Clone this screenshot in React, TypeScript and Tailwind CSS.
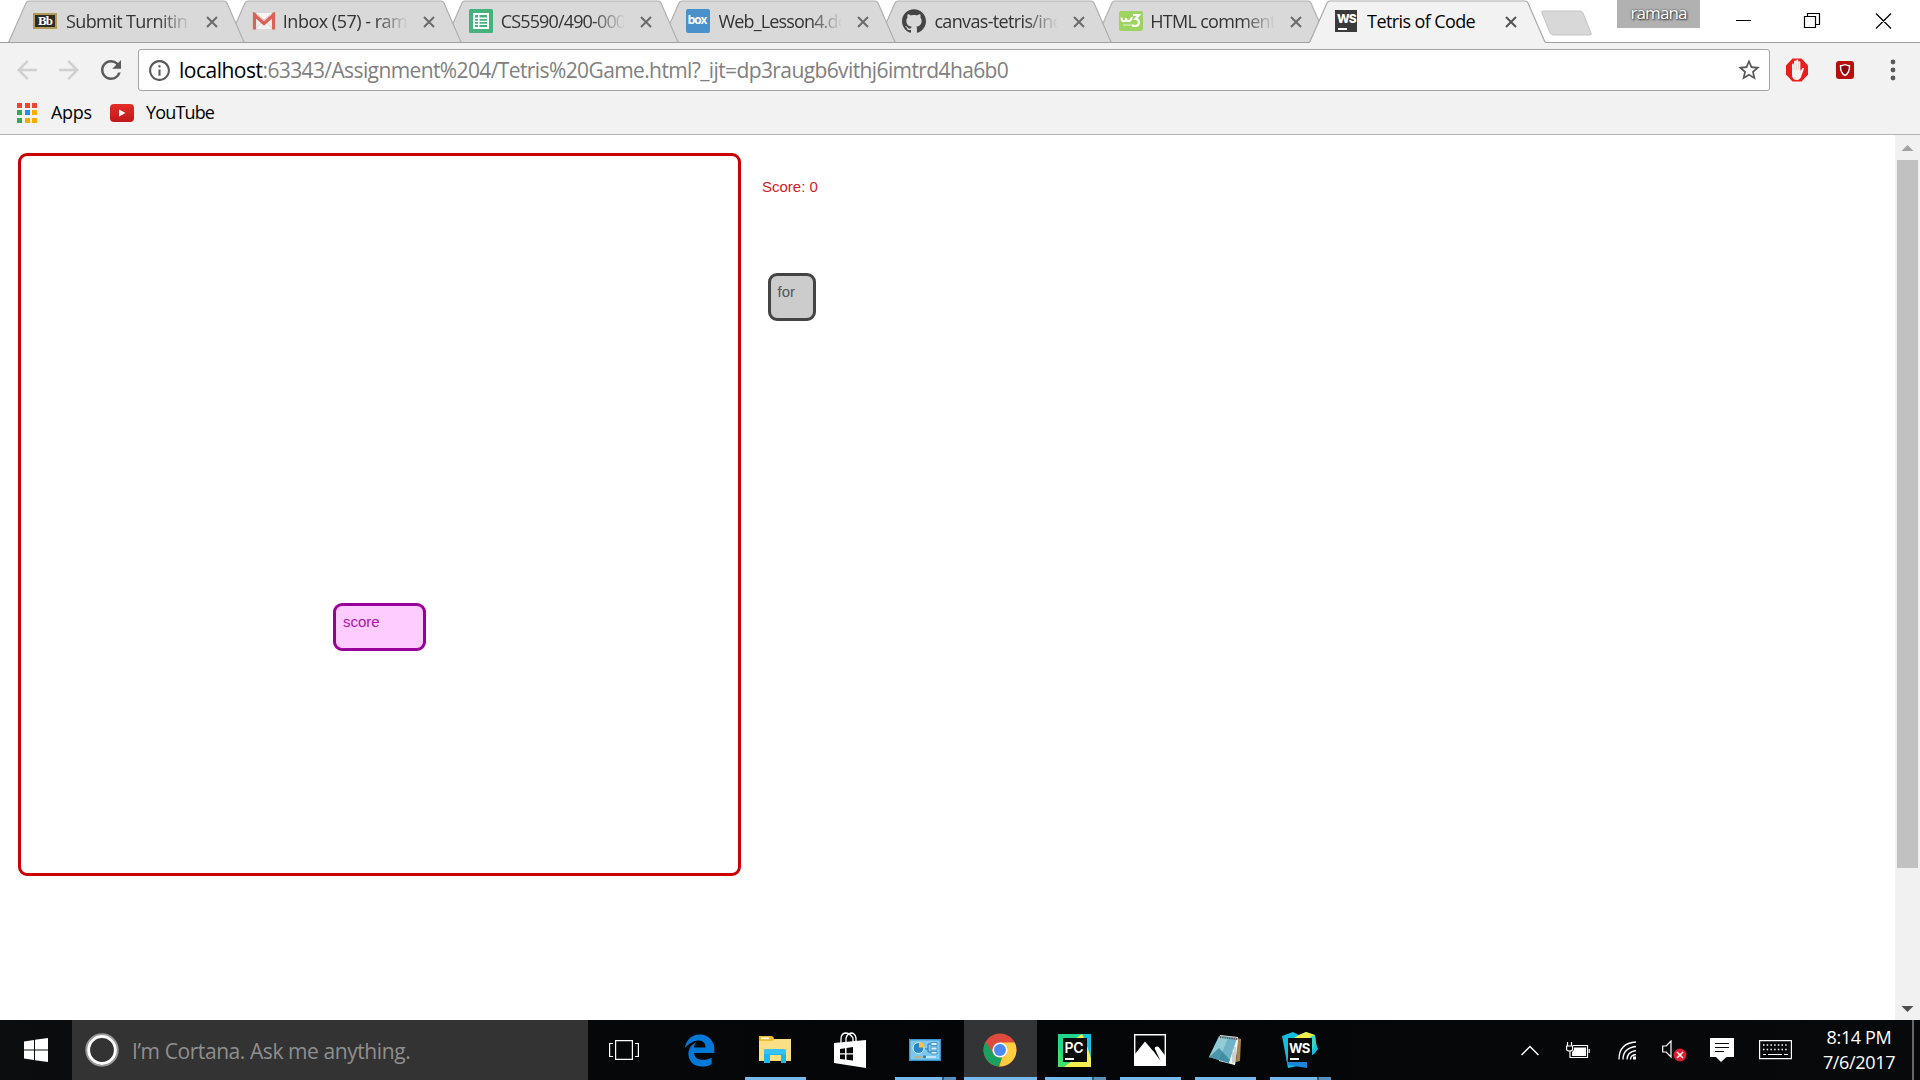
import React from "react";
import { SiGithub } from "react-icons/si";
import { FaEdgeLegacy } from "react-icons/fa6";
import { MdArrowBack, MdArrowForward, MdRefresh, MdInfoOutline, MdStarBorder } from "react-icons/md";

const UI = "font-['Open_Sans','Noto_Sans',sans-serif]";

function Blackboard() {
  return (
    <div className="mr-[2px] flex h-[16px] w-[24px] shrink-0 items-center justify-center border-2 border-[#b59a55] bg-[#2b2b2b] font-['Liberation_Serif',serif] text-[13px] leading-none font-bold tracking-[-1px] text-white">
      Bb
    </div>
  );
}
function Gmail() {
  return (
    <svg width="24" height="18" viewBox="0 0 24 18">
      <rect x="2" y="1" width="20" height="16" fill="#f1f1f1" />
      <path d="M3 17l7-7M21 17l-7-7" stroke="#d6d6d6" />
      <path d="M2.500 17.500V3L12 11.500 21.500 3v14.500" fill="none" stroke="#dc6258" strokeWidth="3.200" />
      <path d="M1 2.500Q1 .5 3 .5L12 8.500 21 .5q2 0 2 2" fill="#dc6258" />
      <path d="M4 1.200L12 8l8-6.800z" fill="#f7f7f7" />
    </svg>
  );
}
function Sheets() {
  return (
    <svg width="24" height="24" viewBox="0 0 24 24">
      <rect width="24" height="24" rx="1.500" fill="#43b27c" />
      <path d="M4 4h16v16H4z" fill="#fff" />
      <path d="M6 6h3v2.500H6zM10.500 6H18v2.500h-7.500zM6 10h3v1.700H6zM10.500 10H18v1.700h-7.500zM6 13h3v1.700H6zM10.500 13H18v1.700h-7.500zM6 16h3v2H6zM10.500 16H18v2h-7.500z" fill="#43b27c" />
    </svg>
  );
}
function Box() {
  return (
    <div className="flex h-[24px] w-[24px] items-center justify-center rounded-[2px] bg-[#4a90cb] pr-px pb-px font-['Inter',sans-serif] text-[12px] leading-none font-bold tracking-[-1px] text-white">
      box
    </div>
  );
}
function W3() {
  return (
    <div className="flex h-[20px] w-[24px] items-center justify-center rounded-[2px] bg-[#9fd35f]">
      <svg width="24" height="20" viewBox="0 0 24 20" fill="none" stroke="#fff">
        <path d="M2.500 6.500c0 5 4.500 5 4.500.5 0 4.500 5 4 6-1" strokeWidth="2" />
        <path d="M14 4h6l-3.500 4c5 0 4.500 7-.5 7-1.500 0-2.500-.7-2.500-1.500" strokeWidth="2.200" />
        <path d="M4 14h8" strokeWidth="1" opacity=".7" />
      </svg>
    </div>
  );
}
function WebStormTab() {
  return (
    <div className="mr-[3px] flex h-[22px] w-[22px] shrink-0 flex-col bg-[#3a3a3a] pt-[2px] pl-[2px] font-['Inter',sans-serif] text-[12px] leading-[13px] font-extrabold tracking-[-1px] text-white">
      WS
      <div className="mt-[3px] ml-px h-[2px] w-[9px] bg-white" />
    </div>
  );
}

type TabProps = { title: string; icon: React.ReactNode; active?: boolean; fit: string; layer: string; first?: boolean };

function Tab({ title, icon, active = false, fit, layer, first = false }: TabProps) {
  const edge = active || first ? 0 : 2;
  return (
    <div className={`relative -mr-[20.17px] h-[43px] w-[237px] shrink-0 ${layer}`}>
      <svg className="absolute inset-0" width="237" height="43" viewBox="0 0 237 43">
        <path
          d={`M${edge - 0.5} 43L${edge + 0.8} 41.500 ${edge + 18} 3Q${edge + 19} 1 ${edge + 21} 1H216Q218 1 219 3L235.500 41Q236.500 43 239 43z`}
          fill={active ? "#f2f2f2" : "#d9d9d9"}
        />
        <path
          d={`M${edge - 0.5} 42.500Q${edge + 0.5} 42.500 ${edge + 1.2} 41L${edge + 18} 3Q${edge + 19} 1 ${edge + 21} 1H216Q218 1 219 3L235.500 41Q236 42.500 238 42.500`}
          fill="none"
          stroke={active ? "#a9a9a9" : "#b0b0b0"}
          strokeWidth="1.200"
        />
        {!active && <path d="M0 42.500h237" stroke="#a0a0a0" />}
      </svg>
      <div className="relative flex h-[41px] items-center pl-[25px]">
        <div className="flex w-[26px] shrink-0 justify-end">{icon}</div>
        <div
          className={
            active
              ? "ml-[7px] w-[124px] overflow-hidden text-[18px] leading-6 whitespace-nowrap text-black"
              : "ml-[7px] w-[124px] overflow-hidden text-[18px] leading-6 whitespace-nowrap text-[#333] [mask-image:linear-gradient(to_right,black_74%,transparent_101%)]"
          }
        >
          <span className={fit}>{title}</span>
        </div>
        <svg className={active ? "mt-[3px] ml-[14px]" : "mt-[3px] ml-[16px]"} width="12" height="12" viewBox="0 0 12 12" stroke={active ? "#555" : "#6b6b6b"} strokeWidth="2">
          <path d="M1 1l10 10M11 1L1 11" />
        </svg>
      </div>
    </div>
  );
}

function TabStrip() {
  return (
    <div className="relative flex h-[43px] bg-white pl-[8px]">
      <div className="absolute inset-x-0 bottom-0 h-px bg-[#a0a0a0]" />
      <Tab title="Submit Turnitin" icon={<Blackboard />} fit="tracking-[-0.6px]" layer="z-[6]" first />
      <Tab title="Inbox (57) - ram" icon={<Gmail />} fit="tracking-[-0.5px]" layer="z-[5]" />
      <Tab title="CS5590/490-000" icon={<Sheets />} fit="ml-px tracking-[-0.85px]" layer="z-[4]" />
      <Tab title="Web_Lesson4.do" icon={<Box />} fit="ml-[2px] tracking-[-0.85px]" layer="z-[3]" />
      <Tab title="canvas-tetris/ind" icon={<SiGithub size={24} color="#444" />} fit="ml-px tracking-[-0.65px]" layer="z-[2]" />
      <Tab title="HTML comment" icon={<W3 />} fit="tracking-[-0.7px]" layer="z-[1]" />
      <Tab title="Tetris of Code" icon={<WebStormTab />} fit="tracking-[-0.6px]" layer="z-10" active />
      <svg className="mt-[10px] ml-[14px]" width="54" height="27" viewBox="0 0 54 27">
        <path d="M3 1h37q2 0 3 2l8 20q1 2-1 2H14q-3 0-4-2L2 3Q1 1 3 1z" fill="#d8d8d8" stroke="#c4c4c4" />
      </svg>
      <div className="ml-auto flex">
        <div className="mr-[36px] flex h-[28px] w-[83px] justify-center bg-[#b1b1b1] text-[17px] leading-[26px] tracking-[-0.9px] text-white [text-shadow:0_0_2px_#333,1px_1px_2px_#333]">
          ramana
        </div>
        <svg className="mt-[12px] mr-[28px]" width="156" height="18" viewBox="0 0 156 18" fill="none" stroke="#000" strokeWidth="1.200">
          <path d="M0 8.500h15M68.500 4.500h11v11h-11zM71.500 4.500v-3h12v11h-4M140 1.500l15 15M155 1.500l-15 15" />
        </svg>
      </div>
    </div>
  );
}

const APP_DOTS = ["#f44336", "#f44336", "#f44336", "#34a853", "#2a8cf0", "#f9ab00", "#34a853", "#f9ab00", "#f9ab00"];

function Toolbar() {
  return (
    <div className="h-[92px] border-b border-[#b4b4b4] bg-[#f2f2f2]">
      <div className="flex h-[54px] items-center">
        <MdArrowBack className="ml-[12px]" size={30} color="#d0d0d0" />
        <MdArrowForward className="ml-[12px]" size={30} color="#d0d0d0" />
        <MdRefresh className="ml-[12px]" size={30} color="#5a5a5a" />
        <div className="ml-[12px] flex h-[42px] w-[1632px] items-center rounded-[3px] border border-[#a6a6a6] bg-white pr-[7px] pl-[8px]">
          <MdInfoOutline size={25} color="#5a5a5a" />
          <div className="ml-[7px] text-[21px] leading-7 tracking-[-0.61px] whitespace-nowrap text-[#808080]">
            <span className="tracking-[-0.5px] text-black">localhost</span>:63343/Assignment%204/Tetris%20Game.html?_ijt=dp3raugb6vithj6imtrd4ha6b0
          </div>
          <MdStarBorder className="ml-auto" size={26} color="#5a5a5a" />
        </div>
        <svg className="ml-[15px]" width="24" height="24" viewBox="0 0 24 24">
          <path d="M7.500.5h9l6.500 7v9l-6.500 7h-9L1 16.500v-9z" fill="#ea1c1c" />
          <path d="M7 14V7q0-1.400 1-1.400t1 1.400V4q0-1.400 1.100-1.400T11.200 4V3q0-1.400 1.100-1.400T13.400 3v1.500q0-1.200 1-1.200t1 1.200V13l1.800-2.600q1-1 1.900-.2L16.400 18Q15 22 12 22q-5 0-5-5z" fill="#f5f2f2" />
          <path d="M9.100 6v5.500M11.200 5v6.500M13.400 5v6.500" stroke="#d9a9a9" strokeWidth=".5" />
        </svg>
        <svg className="ml-[27px]" width="18" height="18" viewBox="0 0 18 18">
          <rect width="18" height="18" rx="3" fill="#b80e0e" />
          <path d="M9 3.500q2.500 1.300 4.500 1.200Q13.700 12 9 14.500 4.300 12 4.500 4.700 6.500 4.800 9 3.500z" fill="#8c0000" stroke="#fff" strokeWidth="1.400" />
        </svg>
        <svg className="ml-[36px]" width="6" height="24" viewBox="0 0 6 24" fill="#5a5a5a">
          <circle cx="3" cy="4" r="2.400" />
          <circle cx="3" cy="12" r="2.400" />
          <circle cx="3" cy="20" r="2.400" />
        </svg>
      </div>
      <div className="flex h-[31px] items-center pl-[17px] text-[18px] tracking-[-0.3px] text-black">
        <div className="grid w-[20px] grid-cols-3 gap-[2.5px]">
          {APP_DOTS.map((c, i) => (
            <div key={i} className="h-[5px] w-[5px]" style={{ backgroundColor: c }} />
          ))}
        </div>
        <span className="ml-[14px] w-[41px] whitespace-nowrap">Apps</span>
        <div className="ml-[18px] flex h-[18px] w-[24px] items-center justify-center rounded-[4px] bg-linear-to-b from-[#e52d27] to-[#bf171d]">
          <svg width="7" height="8" viewBox="0 0 7 8">
            <path d="M0 .5l6.500 3.500L0 7.500z" fill="#fff" />
          </svg>
        </div>
        <span className="ml-[12px] tracking-[-0.85px]">YouTube</span>
      </div>
    </div>
  );
}

function Page() {
  return (
    <div className="flex h-[885px] bg-white font-['Liberation_Sans',Arial,sans-serif] text-[15px] leading-[17px]">
      <div className="relative mt-[18px] ml-[18px] h-[723px] w-[723px] rounded-[9px] border-[3px] border-[#cc0000]">
        <div className="absolute top-[447px] left-[312px] h-[48px] w-[93px] rounded-[9px] border-[3px] border-[#990099] bg-[#ffccff] pt-[7px] pl-[7px] text-[#a31aa3]">
          score
        </div>
      </div>
      <div className="mt-[43px] ml-[21px] text-[#d41c1c]">
        Score: 0
        <div className="mt-[78px] ml-[6px] h-[48px] w-[48px] rounded-[9px] border-[3px] border-[#444] bg-[#ccc] pt-[7px] pl-[6.5px] text-[#555]">for</div>
      </div>
      <div className="ml-auto flex w-[25px] flex-col items-center bg-[#f1f1f1]">
        <svg width="25" height="25" viewBox="0 0 25 25">
          <path d="M6.500 16l6-6 6 6z" fill="#a3a3a3" />
        </svg>
        <div className="h-[708px] w-[21px] bg-[#c1c1c1]" />
        <svg className="mt-auto" width="25" height="22" viewBox="0 0 25 22">
          <path d="M6.500 8l6 6 6-6z" fill="#505050" />
        </svg>
      </div>
    </div>
  );
}

function TaskItem({ children, state = "closed" }: { children: React.ReactNode; state?: "closed" | "open" | "stack" | "active" }) {
  return (
    <div
      className={
        state === "active"
          ? "relative mx-px flex h-[60px] w-[73px] items-center justify-center bg-[#333436] pr-[2px]"
          : "relative flex h-[60px] w-[75px] items-center justify-center pr-[2px]"
      }
    >
      {children}
      {state === "active" && <div className="absolute inset-x-0 bottom-0 h-[3px] bg-[#76b9ed]" />}
      {state === "open" && <div className="absolute bottom-0 left-[7px] h-[3px] w-[61px] bg-[#76b9ed]" />}
      {state === "stack" && (
        <div className="absolute bottom-0 left-[7px] flex h-[3px] w-[61px] bg-[#5b90ba]">
          <div className="box-content w-[47px] border-r-2 border-[#35566f] bg-[#76b9ed]" />
        </div>
      )}
    </div>
  );
}

function Explorer() {
  return (
    <svg width="32" height="28" viewBox="0 0 32 28">
      <path d="M0 1h13l2 2h17v22H0z" fill="#f4c84e" />
      <path d="M0 0h13l2 2-2 3H0z" fill="#f3bd29" />
      <path d="M2 1.500h8v1.600H2z" fill="#fff" />
      <path d="M0 5h14l2-2h16v21.500H0z" fill="#fbdf84" />
      <path d="M5 27V15q0-2 2-2h18q2 0 2 2v12h-5v-8H11v8z" fill="#1fb5ee" />
      <path d="M5 15q0-2 2-2h18q2 0 2 2v3H5z" fill="#37c2f5" />
    </svg>
  );
}
function Store() {
  return (
    <svg width="32" height="36" viewBox="0 0 32 36">
      <path d="M7 12V7q0-5 4-6 5 0 8 5v4M12 11V6q1-4 5-5 4 0 5 5v4" fill="none" stroke="#fff" strokeWidth="1.300" />
      <path d="M0 11l32-3v28L0 31z" fill="#fff" />
      <path d="M6 17l5-.8v5H6zM12.500 16l6.500-1v6.200h-6.500zM6 22.500h5v5l-5-.6zM12.500 22.500H19v6l-6.500-.8z" fill="#080808" />
    </svg>
  );
}
function ControlPanel() {
  return (
    <svg width="32" height="22" viewBox="0 0 32 22">
      <rect x=".7" y=".7" width="30.600" height="20.600" fill="#7cc8ee" stroke="#3b95cf" strokeWidth="1.400" />
      <circle cx="9.500" cy="9" r="5.500" fill="#2987c9" stroke="#d8f1ff" strokeWidth="1" />
      <path d="M10 8.500V3q5 0 5.500 5.500z" fill="#ffc13d" />
      <path d="M16 10h3V5h3M19 10v3h3" stroke="#2679b2" fill="none" />
      <path d="M22 3.500h6v3h-6zM22 8h6v3h-6zM22 12.500h6v2.500h-6z" fill="#d8f1ff" stroke="#3585b8" strokeWidth=".8" />
      <path d="M5 18h9" stroke="#b7b58b" strokeWidth="1.500" />
      <path d="M14 18h13" stroke="#d8f1ff" strokeWidth="1.500" />
      <circle cx="15.500" cy="17.700" r="1.500" fill="#2679b2" />
    </svg>
  );
}
function Chrome() {
  return (
    <svg width="34" height="34" viewBox="0 0 34 34">
      <circle cx="17" cy="17" r="16.500" fill="#dd4b3e" />
      <path d="M17 9.500h14.700A16.500 16.500 0 0 1 16.700 33.500L23.500 20.700z" fill="#ffcd40" />
      <path d="M2.700 8.800L10.500 20.700Q13 25 18.500 24.300L17 33.500A16.500 16.500 0 0 1 2.700 8.800z" fill="#1aa15f" />
      <path d="M23.500 20.700L17 33.500l-.8 0 2.800-9z" fill="#ffcd40" />
      <circle cx="17" cy="17" r="7.600" fill="#fff" />
      <circle cx="17" cy="17" r="6" fill="#4c8bf5" />
    </svg>
  );
}
function PyCharm() {
  return (
    <div className="relative flex h-[33px] w-[33px] items-center justify-center">
      <svg className="absolute inset-0" width="33" height="33" viewBox="0 0 33 33">
        <path d="M0 0h33v33H0z" fill="#24d58e" />
        <path d="M0 12l6 16 16 5H0z" fill="#3fe06e" />
        <path d="M17 5l7-5 9 20v13H6l8-6z" fill="#f3f04f" />
        <path d="M25 0h8v24z" fill="#17bfe0" />
      </svg>
      <div className="relative h-[24px] w-[24px] bg-[#0b0b0b] pt-[3px] pl-[2px] font-['Inter',sans-serif] text-[14px] leading-[14px] font-semibold tracking-[-0.2px] text-white">
        PC
        <div className="mt-[3px] h-[2px] w-[9px] bg-white" />
      </div>
    </div>
  );
}
function Photos() {
  return (
    <svg width="32" height="32" viewBox="0 0 32 32">
      <path d="M.7.7h30.600v30.600H.7z" fill="none" stroke="#fff" strokeWidth="1.400" />
      <path d="M1 20L11 7.500l8.500 10 1.500-4q2-2 4 0l6 8V31H1z" fill="#fff" />
      <path d="M19 16.500l7.500 10.500-6-13z" fill="#080808" />
    </svg>
  );
}
function Notepad() {
  return (
    <svg width="34" height="32" viewBox="0 0 34 32">
      <path d="M29 4l4 1-1 22-4 1z" fill="#a98448" />
      <path d="M12 2l18 2-3 27-16-4z" fill="#dfe8ec" />
      <path d="M11 2l18 2-8 25L1 23z" fill="#6fb4c4" />
      <path d="M11 3l9 1-9 22-10-3z" fill="#a8d5de" opacity=".65" />
      <path d="M1 23l10-9 11 12-1 3z" fill="#2b7f95" opacity=".7" />
      <path d="M29 5l1 1-3 25-6-2z" fill="#eef2f4" />
      <path d="M27 13v15M25 18v11" stroke="#a7b3b8" />
      <path d="M12 2.500l18 2" stroke="#555" strokeWidth="3" strokeDasharray="1.300 1" />
      <path d="M12 1.500l18 2" stroke="#ddd" strokeWidth="1" />
    </svg>
  );
}
function WebStorm() {
  return (
    <div className="relative flex h-[36px] w-[36px] items-center justify-center">
      <svg className="absolute inset-0" width="36" height="36" viewBox="0 0 36 36">
        <path d="M0 4L11 0l6 3 7-3 9 3 1 8 2 6-4 5-7 4v6L6 36z" fill="#13bfe0" />
        <path d="M17 3l7-3 9 3-3 9-18-6z" fill="#f5ee4a" />
        <path d="M28 5l5-2 1 8-4 8z" fill="#39d6c4" />
        <path d="M4 27l21 1v8L6 33z" fill="#1c87d8" />
      </svg>
      <div className="relative h-[24px] w-[24px] bg-[#0b0b0b] pt-[3px] pl-[1.5px] font-['Inter',sans-serif] text-[13px] leading-[14px] font-bold tracking-[-0.7px] text-white">
        WS
        <div className="mt-[3px] ml-px h-[2px] w-[9px] bg-white" />
      </div>
    </div>
  );
}

function Tray() {
  return (
    <div className="ml-auto flex h-[60px] items-center">
      <svg width="18" height="11" viewBox="0 0 18 11" fill="none" stroke="#fff" strokeWidth="1.500">
        <path d="M.5 10L9 1.500l8.500 8.500" />
      </svg>
      <svg className="ml-[27px]" width="24" height="17" viewBox="0 0 24 17" fill="none" stroke="#fff" strokeWidth="1.200">
        <path d="M7 3.500h14.500v12H4V9M1.500 0v4M5.500 0v4M.6 4h6v3q0 2-3 2t-3-2zM23.200 7v4" />
        <path d="M8 5.500h12v8.500H6v-4l2-2z" fill="#fff" stroke="none" />
      </svg>
      <svg className="ml-[28px]" width="19" height="19" viewBox="0 0 19 19" fill="none" stroke="#fff" strokeWidth="1.300">
        <path d="M1 18.500Q1 2 18 1M5 18.500Q5 7 18 5.500M9 18.500Q9 11 18 9.500M12.500 18.500q0-4.500 5.500-5" />
        <path d="M15 15.500h3v3h-3z" fill="#fff" stroke="none" />
      </svg>
      <svg className="mt-[2px] ml-[25px]" width="25" height="22" viewBox="0 0 25 22" fill="none" stroke="#fff" strokeWidth="1.200">
        <path d="M.7 6h3.500L9 1v16l-4.800-5H.7z" />
        <circle cx="18" cy="15" r="6.500" fill="#df1f2d" stroke="none" />
        <path d="M15 12l6 6M21 12l-6 6" strokeWidth="1.500" />
      </svg>
      <svg className="ml-[23px]" width="24" height="24" viewBox="0 0 24 24">
        <path d="M0 0h24v19h-7.500L11 24l-5-5H0z" fill="#fff" />
        <path d="M5 5.500h14M5 9.500h14M5 13.500h9" stroke="#080808" strokeWidth="1.200" />
      </svg>
      <svg className="ml-[25px]" width="33" height="20" viewBox="0 0 33 20" fill="none" stroke="#fff" strokeWidth="1.200">
        <path d="M.6.6h31.800v18H.6z" />
        <path d="M4 5h26M4 9.500h26" strokeDasharray="1.500 2.200" strokeWidth="1.500" />
        <path d="M4 14.500h3M9 14.500h14M25 14.500h4" />
      </svg>
      <div className="-mt-px ml-[28px] w-[78px] text-center text-[18px] leading-[25px] tracking-[-0.35px] whitespace-nowrap text-white">
        <div>8:14 PM</div>
        <div>7/6/2017</div>
      </div>
      <div className="mr-[6px] ml-[14px] h-[60px] w-[2px] bg-[#66676a]" />
    </div>
  );
}

function Taskbar() {
  return (
    <div className="flex h-[60px] bg-linear-to-r from-[#0b0d0f] via-[#040506] to-[#08090b]">
      <div className="flex w-[72px] items-center justify-center">
        <svg width="24" height="24" viewBox="0 0 24 24" fill="#fff">
          <path d="M0 3.500L10 2v9.500H0zM11 1.800L24 0v11.500H11zM0 12.500h10V22L0 20.500zM11 12.500h13V24l-13-1.800z" />
        </svg>
      </div>
      <div className="flex w-[516px] items-center bg-[#333] pl-[13px]">
        <svg width="34" height="34" viewBox="0 0 34 34" fill="none">
          <circle cx="17" cy="17" r="15.700" stroke="#999" strokeWidth="2" />
          <circle cx="17" cy="17" r="13.400" stroke="#fff" strokeWidth="3" />
        </svg>
        <span className="mt-[4px] ml-[13px] text-[21px] tracking-[-0.42px] whitespace-nowrap text-[#8f8f8f]">I’m Cortana. Ask me anything.</span>
      </div>
      <div className="flex w-[75px] items-center pl-[21px]">
        <svg width="30" height="20" viewBox="0 0 30 20" fill="none" stroke="#fff" strokeWidth="1.200">
          <path d="M6.600.6h16.800v18.800H6.600zM4 3.500H.6v13H4M26 3.500h3.400v13H26" />
        </svg>
      </div>
      <TaskItem><FaEdgeLegacy size={33} color="#0078d7" /></TaskItem>
      <TaskItem state="open"><Explorer /></TaskItem>
      <TaskItem><Store /></TaskItem>
      <TaskItem state="stack"><ControlPanel /></TaskItem>
      <TaskItem state="active"><Chrome /></TaskItem>
      <TaskItem state="stack"><PyCharm /></TaskItem>
      <TaskItem state="open"><Photos /></TaskItem>
      <TaskItem state="open"><Notepad /></TaskItem>
      <TaskItem state="stack"><WebStorm /></TaskItem>
      <Tray />
    </div>
  );
}

export default function App() {
  return (
    <div className={`flex h-[1080px] w-[1920px] flex-col overflow-hidden ${UI}`}>
      <TabStrip />
      <Toolbar />
      <Page />
      <Taskbar />
    </div>
  );
}
